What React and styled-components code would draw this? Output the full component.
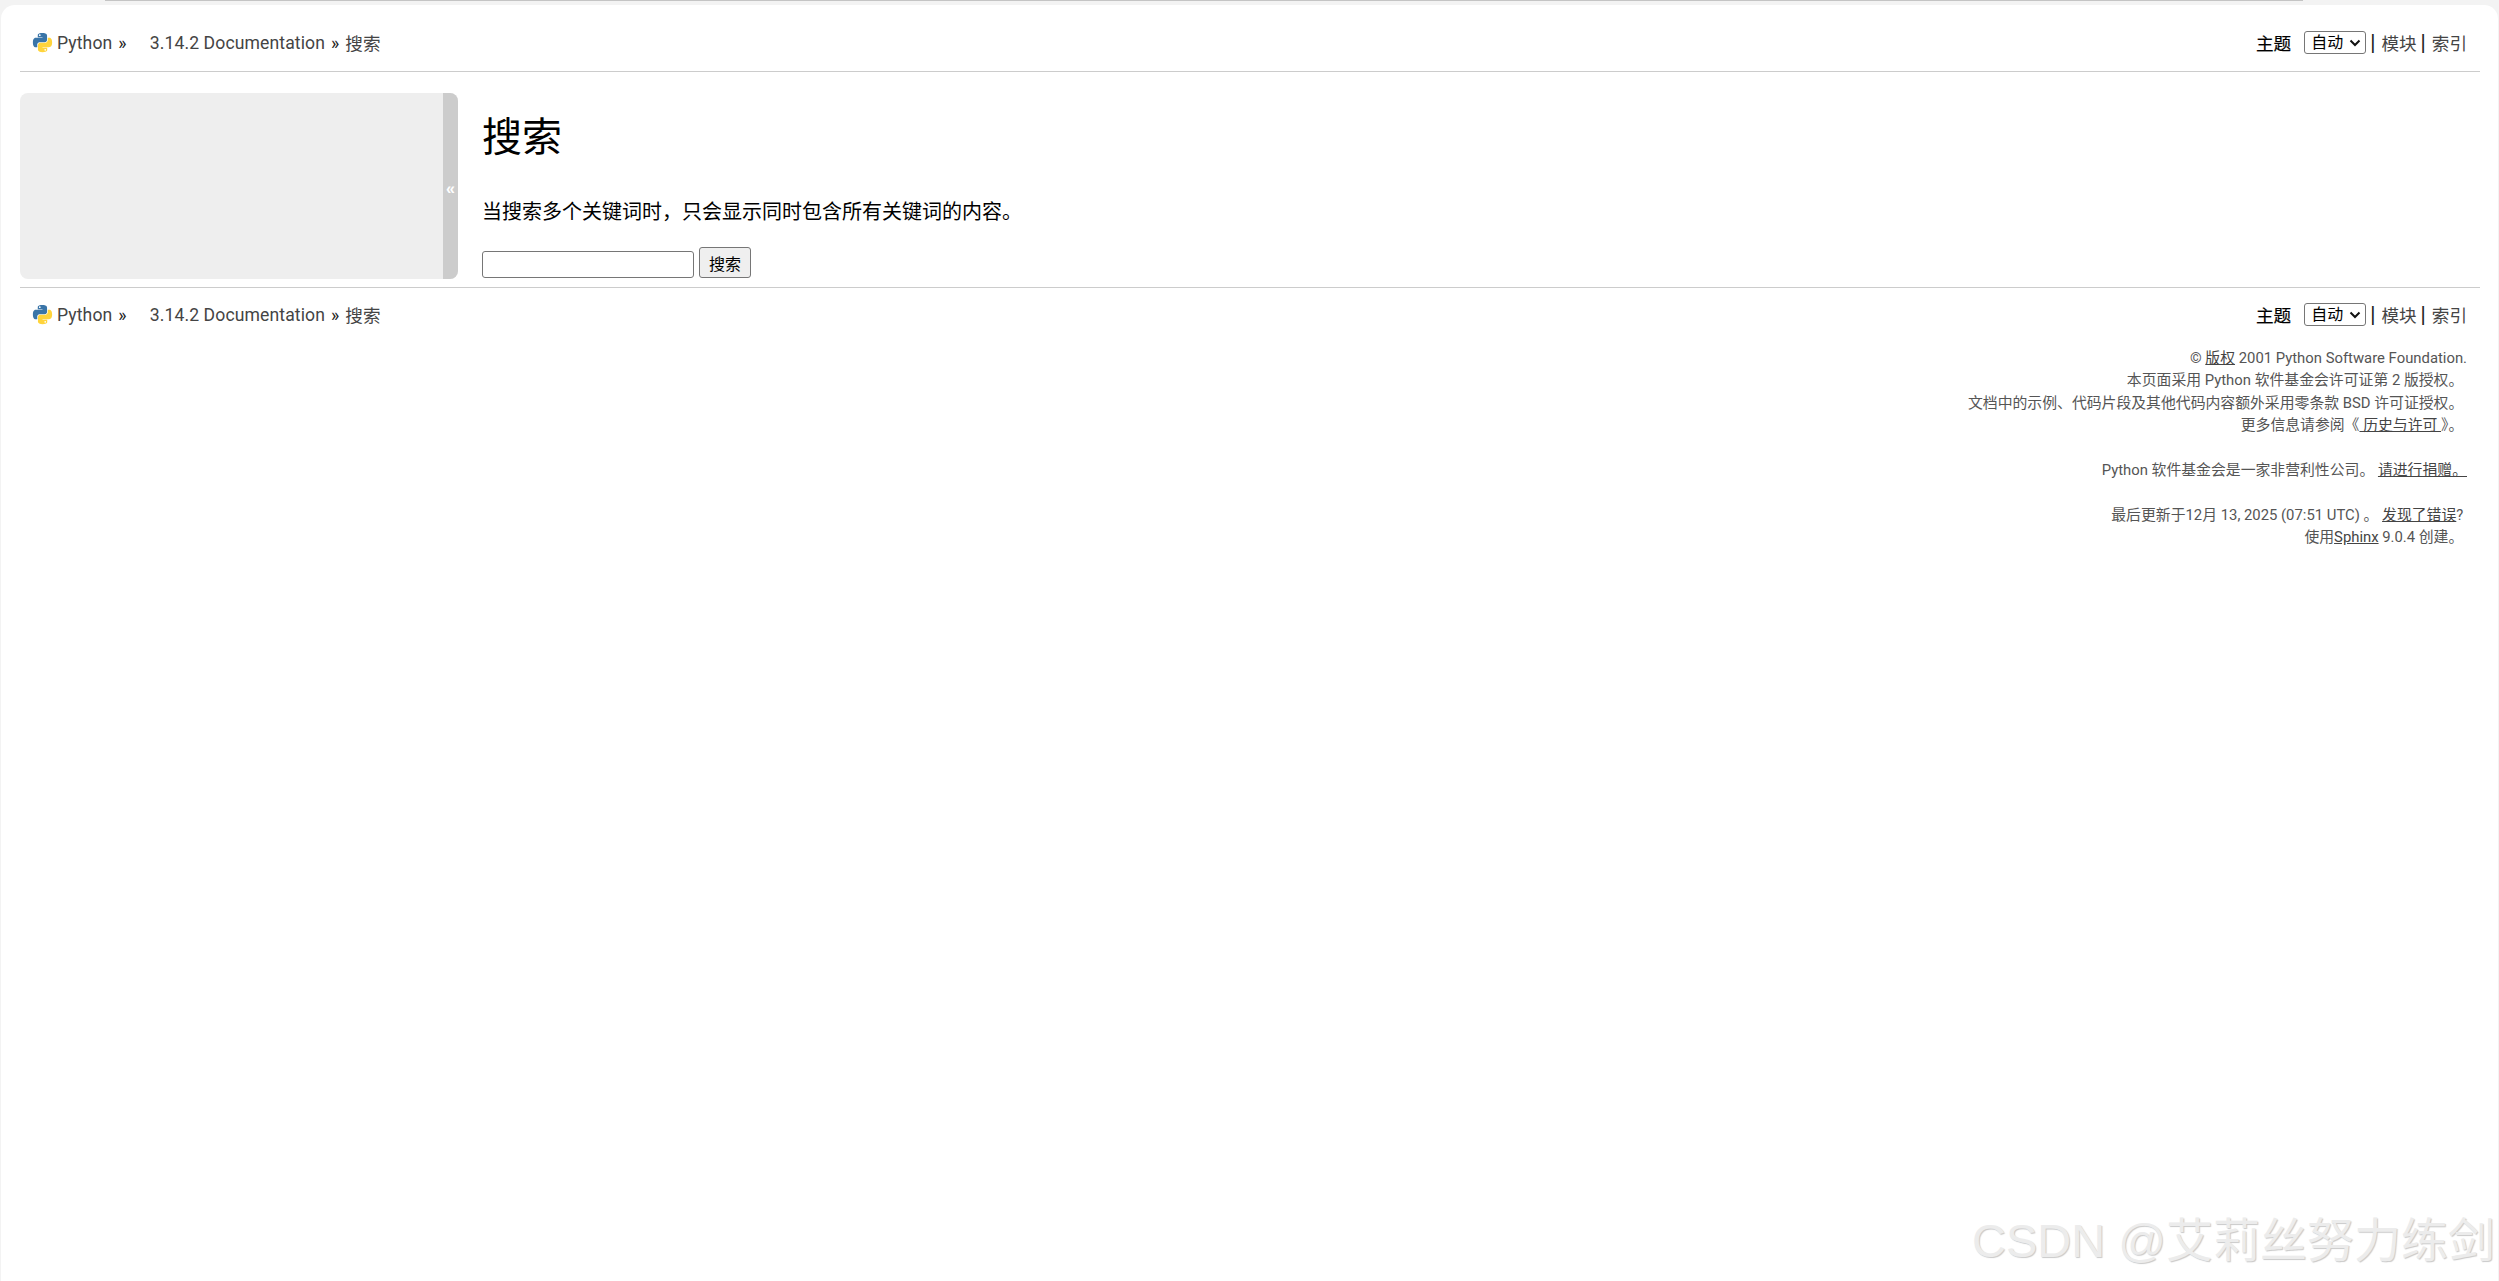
import React from 'react';
import styled, { createGlobalStyle } from 'styled-components';

const sans = `Roboto, 'Noto Sans CJK SC', sans-serif`;
const chevron = `url("data:image/svg+xml,%3Csvg xmlns='http://www.w3.org/2000/svg' width='12' height='8' viewBox='0 0 12 8'%3E%3Cpath d='M1.500 1.500 6 6l4.500-4.500' fill='none' stroke='%23111' stroke-width='2'/%3E%3C/svg%3E")`;

const GlobalStyle = createGlobalStyle`
  html, body {
    margin: 0;
    padding: 0;
    height: 100%;
    background: #f3f3f3;
  }
  #root {
    height: 100%;
  }
`;

const Frame = styled.div`
  position: relative;
  box-sizing: border-box;
  height: 1281px;
  overflow: hidden;
  padding: 5px 1px 0;
`;
const ChromeLine = styled.div`
  position: absolute;
  top: 0;
  left: 105px;
  right: 196px;
  height: 1px;
  background: #c4c4c4;
`;
const Page = styled.div`
  box-sizing: border-box;
  height: 1276px;
  background: #fff;
  border-radius: 14px 14px 0 0;
  padding: 0 18px 0 19px;
  font-family: ${sans};
  color: #000;
`;
const NavBar = styled.div`
  display: flex;
  align-items: center;
  justify-content: space-between;
  height: ${p => p.$height}px;
  padding: ${p => p.$pad || 0}px 13px 0 0;
  font-size: 17.6px;
  color: #444;
  border-bottom: ${p => (p.$ruled ? '1px solid #ccc' : 'none')};
  border-top: ${p => (p.$top ? '1px solid #ccc' : 'none')};
`;
const Trail = styled.div`
  display: flex;
  align-items: center;
  padding-left: 12px;
  letter-spacing: 0.1px;
`;
const Logo = styled.svg`
  width: 21px;
  height: 21px;
  margin-right: 4px;
`;
const Sep = styled.span`
  color: #222;
  margin: 0 ${p => p.$after || 0}px 0 6px;
`;
const Tools = styled.div`
  display: flex;
  align-items: center;
`;
const ThemeLabel = styled.label`
  color: #000;
  margin-right: 13px;
  -webkit-text-stroke: 0.2px #000;
`;
const ThemeSelect = styled.select`
  box-sizing: border-box;
  width: 62px;
  height: 23px;
  padding: 0 0 0 6px;
  font-family: ${sans};
  font-size: 16px;
  color: #000;
  appearance: none;
  background: #fff ${chevron} no-repeat right 4px center;
  border: 1px solid #767676;
  border-radius: 3px;
`;
const Pipe = styled.span`
  font-family: 'Liberation Sans', sans-serif;
  font-size: 20px;
  color: #222;
  margin: 0 6px 0 4px;
`;
const Main = styled.div`
  display: flex;
  margin-top: 21px;
  height: 194px;
`;
const Sidebar = styled.div`
  display: flex;
  justify-content: flex-end;
  flex: none;
  width: 438px;
  height: 186px;
  background: #eee;
  border-radius: 8px;
  overflow: hidden;
`;
const Collapse = styled.div`
  display: flex;
  align-items: center;
  justify-content: center;
  width: 15px;
  background: #ccc;
  color: #fff;
  font-size: 16px;
  font-weight: 700;
  font-family: 'Liberation Sans', ${sans};
  padding-top: 6px;
  box-sizing: border-box;
`;
const Content = styled.div`
  padding-left: 24px;
`;
const Title = styled.h1`
  margin: 20px 0 0;
  font-size: 40px;
  line-height: 50px;
  font-weight: 400;
`;
const Lead = styled.p`
  margin: 36px 0 0;
  font-size: 20px;
  line-height: 26px;
  color: #000;
`;
const SearchRow = styled.form`
  display: flex;
  align-items: flex-end;
  gap: 5px;
  margin-top: 22px;
`;
const SearchInput = styled.input`
  box-sizing: border-box;
  width: 212px;
  height: 27px;
  border: 1px solid #767676;
  border-radius: 3px;
  background: #fff;
`;
const SearchButton = styled.button`
  box-sizing: border-box;
  width: 52px;
  height: 31px;
  padding: 0;
  font-family: ${sans};
  font-size: 16px;
  color: #000;
  background: #efefef;
  border: 1px solid #767676;
  border-radius: 3px;
`;
const Footer = styled.div`
  padding-right: 13px;
  margin-top: 6px;
  text-align: right;
  font-size: 14.85px;
  line-height: 22.4px;
  color: #555;
`;
const FooterGroup = styled.div`
  margin-bottom: 22.4px;
`;
const FootLink = styled.a`
  color: #444;
  text-decoration: underline;
`;
const Watermark = styled.div`
  position: absolute;
  right: 4px;
  bottom: 12px;
  font-family: 'Liberation Sans', 'Noto Sans CJK SC', sans-serif;
  font-size: 47px;
  line-height: 56px;
  color: #ececec;
  text-shadow: 1px 1px 1px #c9c9c9;
  white-space: nowrap;
`;

const PythonLogo = () => (
  <Logo viewBox="0 0 24 24">
    <path
      fill="#3a75a8"
      d="M11.900 1C6.300 1 6.600 3.400 6.600 3.400v2.500h5.400v.8H4.500S1 6.300 1 12s3.100 5.500 3.100 5.500H6v-2.700s-.1-3.100 3-3.100h5.300s2.900 0 2.900-2.800V3.900S17.600 1 11.900 1zM8.900 2.700a1 1 0 1 1 0 2 1 1 0 0 1 0-2z"
    />
    <path
      fill="#ffd43b"
      d="M12.100 23c5.600 0 5.300-2.400 5.300-2.400v-2.500H12v-.8h7.500S23 17.700 23 12s-3.100-5.500-3.100-5.500H18v2.700s.1 3.100-3 3.100H9.700s-2.900 0-2.900 2.800v5S6.400 23 12.100 23zm3-1.700a1 1 0 1 1 0-2 1 1 0 0 1 0 2z"
    />
  </Logo>
);

const Related = ({ height, pad, ruled, top }) => (
  <NavBar $height={height} $pad={pad} $ruled={ruled} $top={top}>
    <Trail>
      <PythonLogo />
      Python<Sep $after={23}>»</Sep>
      3.14.2 Documentation<Sep $after={6}>»</Sep>
      搜索
    </Trail>
    <Tools>
      <ThemeLabel>主题</ThemeLabel>
      <ThemeSelect defaultValue="auto">
        <option value="auto">自动</option>
        <option value="light">明亮</option>
        <option value="dark">黑暗</option>
      </ThemeSelect>
      <Pipe>|</Pipe>
      模块
      <Pipe>|</Pipe>
      索引
    </Tools>
  </NavBar>
);

export default function App() {
  return (
    <Frame>
      <GlobalStyle />
      <ChromeLine />
      <Page>
        <Related height={57} pad={9} ruled />
        <Main>
          <Sidebar>
            <Collapse>«</Collapse>
          </Sidebar>
          <Content>
            <Title>搜索</Title>
            <Lead>当搜索多个关键词时，只会显示同时包含所有关键词的内容。</Lead>
            <SearchRow>
              <SearchInput type="text" />
              <SearchButton type="button">搜索</SearchButton>
            </SearchRow>
          </Content>
        </Main>
        <Related height={53} top />
        <Footer>
          <FooterGroup>
            <div>© <FootLink>版权</FootLink> 2001 Python Software Foundation.</div>
            <div>本页面采用 Python 软件基金会许可证第 2 版授权。&nbsp;</div>
            <div>文档中的示例、代码片段及其他代码内容额外采用零条款 BSD 许可证授权。&nbsp;</div>
            <div>更多信息请参阅《<FootLink> 历史与许可 </FootLink>》。&nbsp;</div>
          </FooterGroup>
          <FooterGroup>
            Python 软件基金会是一家非营利性公司。 <FootLink>请进行捐赠。</FootLink>
          </FooterGroup>
          <div>最后更新于12月 13, 2025 (07:51 UTC) 。 <FootLink>发现了错误</FootLink>?&nbsp;</div>
          <div>使用<FootLink>Sphinx</FootLink> 9.0.4 创建。&nbsp;</div>
        </Footer>
      </Page>
      <Watermark>CSDN @艾莉丝努力练剑</Watermark>
    </Frame>
  );
}
